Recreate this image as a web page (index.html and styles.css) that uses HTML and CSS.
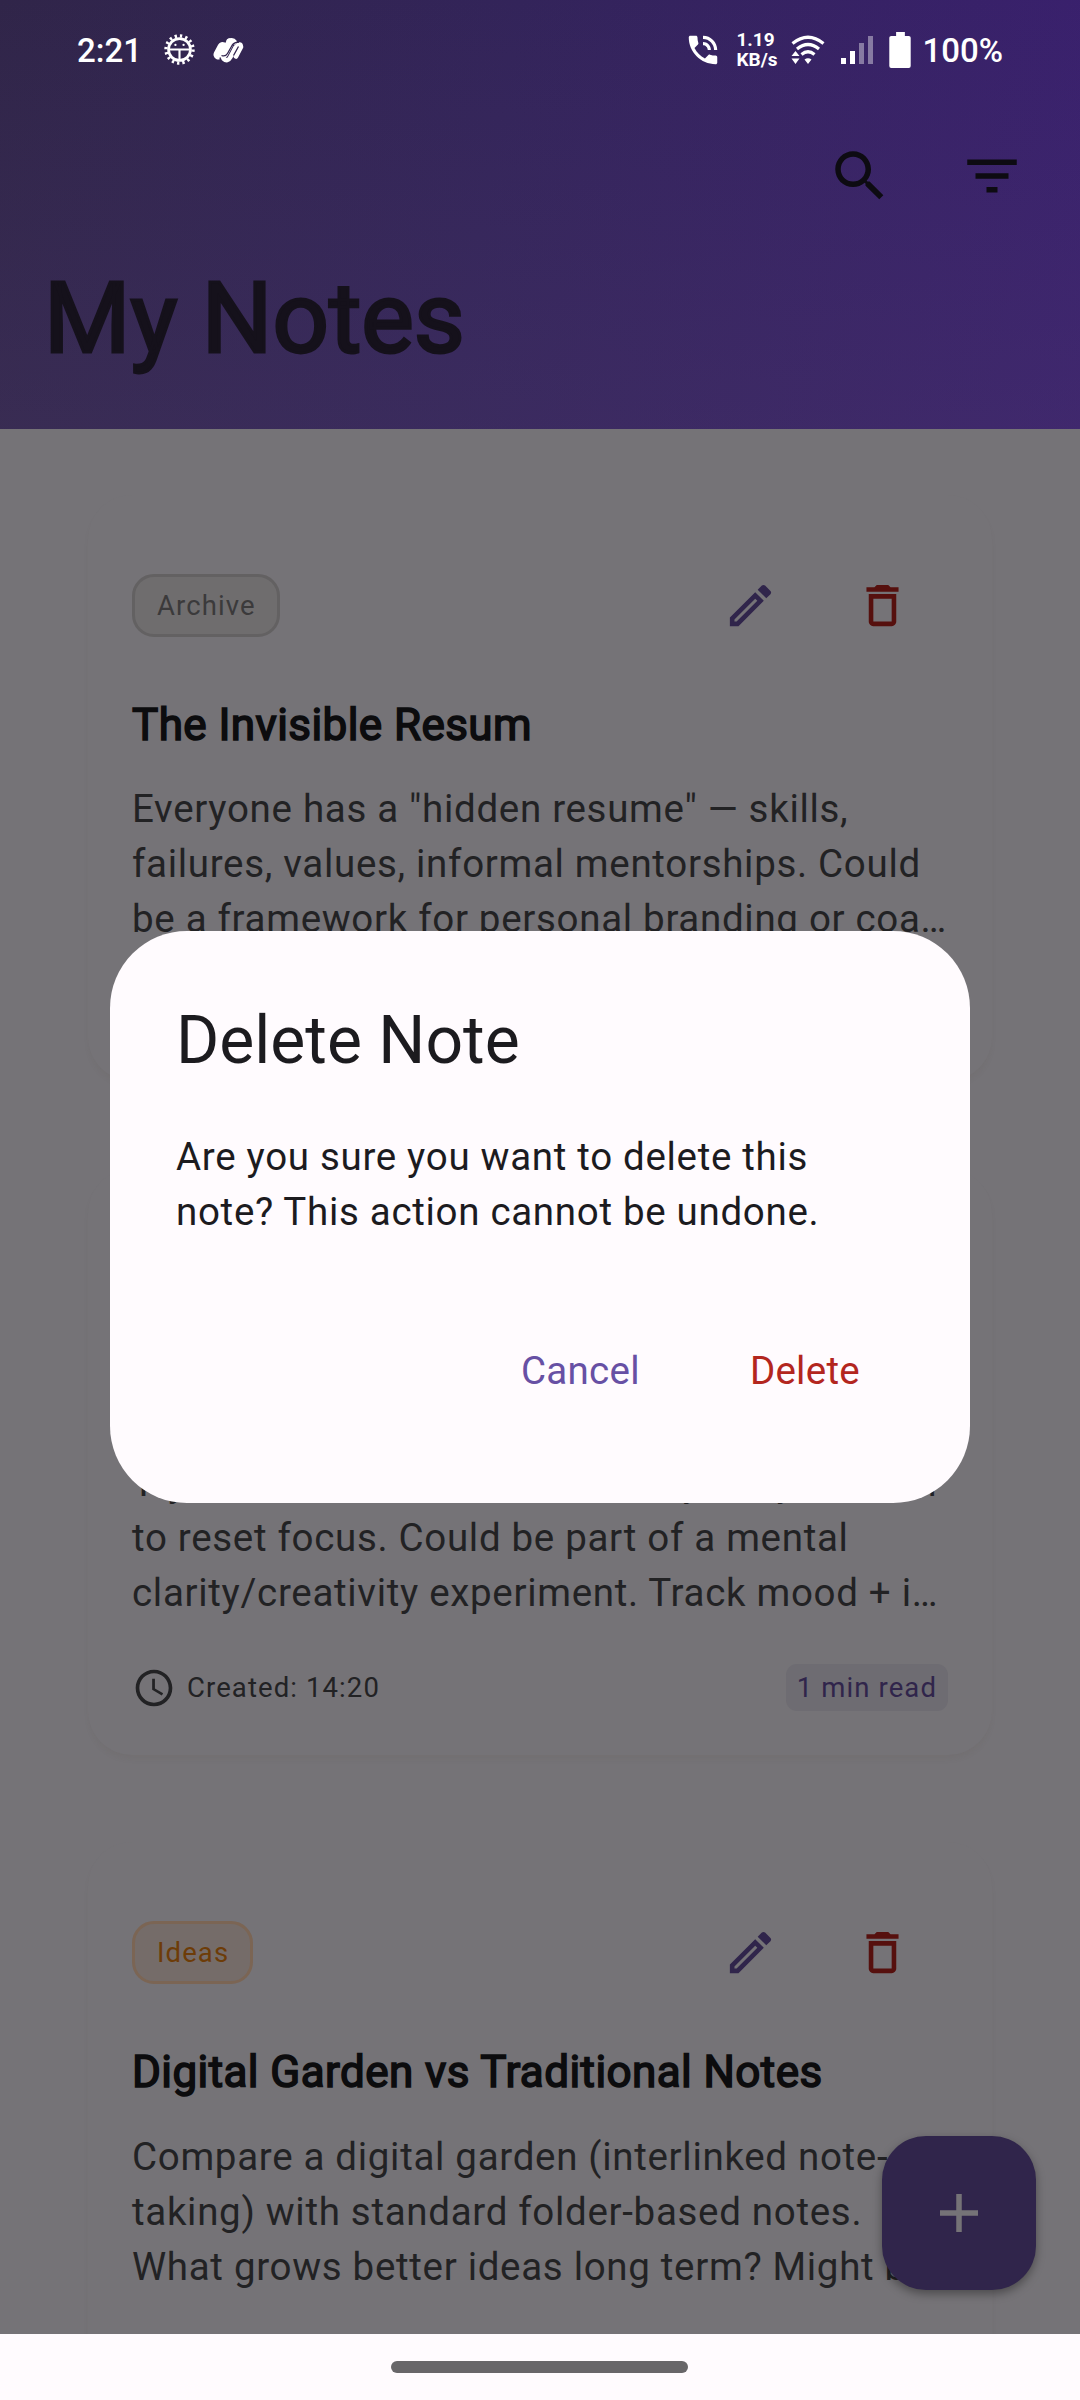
FILE: index.html
```html
<!DOCTYPE html>
<html lang="en">
<head>
<meta charset="utf-8">
<title>My Notes</title>
<link rel="stylesheet" href="styles.css">
</head>
<body>
<svg class="defs" aria-hidden="true">
  <symbol id="edit" viewBox="0 0 24 24"><path d="M14.06 9.02l.92.92L5.92 19H5v-.92l9.06-9.06M17.66 3c-.25 0-.51.1-.7.29l-1.83 1.83 3.75 3.75 1.83-1.83c.39-.39.39-1.02 0-1.41l-2.34-2.34c-.2-.2-.45-.29-.71-.29zm-3.6 3.19L3 17.25V21h3.75L17.81 9.94l-3.75-3.75z"/></symbol>
  <symbol id="trash" viewBox="0 0 24 24"><path d="M16 9v10H8V9h8m-1.500-6h-5l-1 1H5v2h14V4h-3.500l-1-1zM18 7H6v12c0 1.100.9 2 2 2h8c1.100 0 2-.9 2-2V7z"/></symbol>
  <symbol id="clock" viewBox="0 0 24 24"><path d="M11.990 2C6.470 2 2 6.480 2 12s4.470 10 9.990 10C17.520 22 22 17.520 22 12S17.520 2 11.990 2zM12 20c-4.420 0-8-3.580-8-8s3.580-8 8-8 8 3.580 8 8-3.580 8-8 8zm.5-13H11v6l5.250 3.150.75-1.230-4.500-2.670z"/></symbol>
</svg>
<div class="screen">
  <header class="header">
    <div class="status">
      <div class="status-left">
        <span class="time">2:21</span>
        <svg class="gear" viewBox="0 0 32 32"><circle cx="16" cy="16" r="11.300" fill="none" stroke="#fff" stroke-width="2.800"/><circle cx="16" cy="16" r="14" fill="none" stroke="#fff" stroke-width="3.400" stroke-dasharray="2.400 3.098"/><path d="M5 16h22M16 16v11" stroke="#fff" stroke-width="2.200"/><circle cx="11.800" cy="11.300" r="1.200" fill="#fff"/><circle cx="20.200" cy="11.300" r="1.200" fill="#fff"/></svg>
        <svg class="swirl" viewBox="0 0 31 26"><g fill="none" stroke="#fff" stroke-linecap="round" stroke-linejoin="round"><path stroke-width="10" d="M5.500 17.500L9.500 10"/><path stroke-width="8" d="M11 17L17 5.500"/><path stroke-width="5" d="M16 4Q20 2.500 21.500 5"/><path stroke-width="4.600" d="M10.500 21.500Q14.500 25.500 17.500 20L22.500 10.500Q27.500 5 28 10L23 19.500"/></g><path fill="none" stroke="#33264f" stroke-width="1.300" d="M8.500 18.500Q12.500 20 14.500 16.500L19 8.500Q21.500 5 26 5M20.500 18.500L25.500 9.500M7 20.500L8 25"/></svg>
      </div>
      <div class="status-right">
        <svg class="call" viewBox="0 0 24 24" fill="#fff"><path d="M20 15.500c-1.250 0-2.450-.2-3.570-.57-.1-.03-.21-.05-.31-.05-.26 0-.51.1-.71.290l-2.200 2.200c-2.830-1.440-5.150-3.750-6.590-6.590l2.200-2.200c.28-.28.36-.67.25-1.020C8.700 6.450 8.500 5.250 8.500 4c0-.55-.45-1-1-1H4c-.55 0-1 .45-1 1 0 9.390 7.610 17 17 17 .55 0 1-.45 1-1v-3.500c0-.55-.45-1-1-1zM19 12h2c0-4.970-4.030-9-9-9v2c3.870 0 7 3.130 7 7zm-4 0h2c0-2.760-2.240-5-5-5v2c1.660 0 3 1.340 3 3z"/></svg>
        <span class="rate">1.19<br>KB/s</span>
        <svg class="wifi" viewBox="0 0 34 29"><g fill="none" stroke="#fff" stroke-width="3.200"><path d="M1.500 8.500Q17-4 32.500 8.500"/><path d="M6 14Q17 5 28 14"/><path d="M10.500 19.500Q17 14 23.500 19.500"/></g><path fill="#fff" d="M13.500 24.500Q17 22 20.500 24.500L17 29zM.5 21L4.500 16l4 5zM.5 23.500h8L4.500 29z"/></svg>
        <svg class="signal" viewBox="0 0 32 30" fill="#fff"><path d="M0 23h5v6H0zM9 16h5v13H9z"/><path opacity=".4" d="M18 8h5v21h-5zM27 1h5v28h-5z"/></svg>
        <svg class="battery" viewBox="0 0 22 37" fill="#fff"><path d="M7 0h9v4h4a2 2 0 0 1 2 2v29a2 2 0 0 1-2 2H2a2 2 0 0 1-2-2V6a2 2 0 0 1 2-2h5z"/></svg>
        <span class="percent">100%</span>
      </div>
    </div>
    <div class="actions">
      <svg class="icon-lg" viewBox="0 0 24 24"><path d="M15.500 14h-.79l-.28-.27C15.410 12.590 16 11.110 16 9.500 16 5.910 13.090 3 9.500 3S3 5.910 3 9.500 5.910 16 9.500 16c1.610 0 3.090-.59 4.230-1.570l.27.28v.79l5 4.990L20.490 19l-4.990-5zm-6 0C7.010 14 5 11.990 5 9.500S7.010 5 9.500 5 14 7.010 14 9.500 11.990 14 9.500 14z"/></svg>
      <svg class="icon-lg" viewBox="0 0 24 24"><path d="M10 18h4v-2h-4v2zM3 6v2h18V6H3zm3 7h12v-2H6v2z"/></svg>
    </div>
    <h1>My Notes</h1>
  </header>
  <main class="list">
    <article class="card">
      <div class="row"><span class="tag archive">Archive</span><span class="tools"><svg class="edit"><use href="#edit"/></svg><svg class="trash"><use href="#trash"/></svg></span></div>
      <h2>The Invisible Resum</h2>
      <p>Everyone has a "hidden resume" — skills,<br>failures, values, informal mentorships. Could<br>be a framework for personal branding or coa…</p>
      <div class="foot"></div>
    </article>
    <article class="card">
      <div class="row"></div>
      <h2></h2>
      <p>Try sound breaks between every busy hour all<br>to reset focus. Could be part of a mental<br>clarity/creativity experiment. Track mood + i…</p>
      <div class="foot"><svg class="clock"><use href="#clock"/></svg><span>Created: 14:20</span><span class="read">1 min read</span></div>
    </article>
    <article class="card">
      <div class="row"><span class="tag ideas">Ideas</span><span class="tools"><svg class="edit"><use href="#edit"/></svg><svg class="trash"><use href="#trash"/></svg></span></div>
      <h2>Digital Garden vs Traditional Notes</h2>
      <p>Compare a digital garden (interlinked note-<br>taking) with standard folder-based notes.<br>What grows better ideas long term? Might b…</p>
    </article>
  </main>
  <nav class="navbar"><div class="handle"></div></nav>
  <div class="fab"><svg viewBox="0 0 38 38"><path d="M19 0v38M0 19h38" stroke="#757377" stroke-width="5.500"/></svg></div>
  <section class="dialog">
    <h3>Delete Note</h3>
    <p>Are you sure you want to delete this<br>note? This action cannot be undone.</p>
    <div class="buttons"><span class="cancel">Cancel</span><span class="delete">Delete</span></div>
  </section>
</div>
</body>
</html>
```
FILE: styles.css
```css
* { box-sizing: border-box; margin: 0; padding: 0; }
body { font-family: Roboto, sans-serif; background: #757377; }
svg { display: block; flex: none; }
.defs { position: absolute; width: 0; height: 0; }
.screen { position: relative; width: 1080px; height: 2400px; overflow: hidden; display: flex; flex-direction: column; }

.header { height: 429px; flex: none; background: linear-gradient(to bottom, rgba(80,64,104,0) 0%, rgba(80,64,104,.26) 100%), linear-gradient(100deg, #302549 0%, #33245a 45%, #3a206f 100%); }
.status { height: 99px; padding: 0 77px; display: flex; justify-content: space-between; align-items: center; color: #fff; font-weight: 500; }
.status-left, .status-right { display: flex; align-items: center; }
.time, .percent { font-size: 33px; line-height: 40px; padding-top: 2px; }
.time { width: 63px; }
.gear { width: 31px; height: 31px; margin-left: 24px; }
.swirl { width: 31px; height: 26px; margin-left: 18px; }
.call { width: 38px; height: 38px; }
.rate { font-size: 19px; line-height: 20px; font-weight: 700; margin-left: 14px; width: 41px; white-space: nowrap; }
.wifi { width: 34px; height: 29px; margin-left: 14px; }
.signal { width: 32px; height: 30px; margin-left: 16px; }
.battery { width: 22px; height: 36px; margin-left: 16px; }
.percent { margin-left: 11px; }
.actions { height: 150px; display: flex; justify-content: flex-end; gap: 66px; padding: 44px 55px 0 0; }
.icon-lg { width: 66px; height: 66px; fill: #0d0b12; }
h1 { font-size: 99px; line-height: 132px; font-weight: 400; color: #15111b; -webkit-text-stroke: 3px #15111b; padding-left: 44px; margin-top: 3px; }

.list { height: 1905px; flex: none; overflow: hidden; padding: 66px 88px 0; display: flex; flex-direction: column; gap: 88px; background: #757377; }
.card { height: 586px; flex: none; padding: 44px; border-radius: 44px; background: #757377; box-shadow: 0 5px 5px -1px rgba(100,92,80,.12); }
.card:last-child { margin-top: -1px; }
.row { height: 132px; display: flex; align-items: center; justify-content: space-between; }
.tag { height: 63px; padding: 0 21px 0 22px; border: 3px solid; border-radius: 22px; font-size: 27.5px; line-height: 57px; letter-spacing: 1.1px; }
.archive { color: #3b3a3b; background: #6f6d6e; border-color: #636162; }
.ideas { color: #6d3c08; background: #756c69; border-color: #7b6554; }
.tools { display: flex; gap: 77px; padding-right: 38px; }
.tools svg { width: 55px; height: 55px; }
.edit { fill: #30254b; }
.trash { fill: #56100e; }
h2 { font-size: 44px; line-height: 66px; height: 66px; margin-top: 21px; font-weight: 400; -webkit-text-stroke: 1.6px #0c0c0e; color: #0c0c0e; white-space: nowrap; letter-spacing: .42px; }
.card p { margin-top: 23px; font-size: 38.5px; line-height: 55px; letter-spacing: .6875px; color: #222224; white-space: nowrap; }
.card:last-child p { margin-top: 24px; }
.foot { height: 47px; margin-top: 44px; display: flex; align-items: center; font-size: 27.5px; letter-spacing: 1.1px; color: #222224; }
.clock { width: 44px; height: 44px; margin-right: 11px; fill: #222224; }
.read { margin-left: auto; height: 47px; line-height: 47px; padding: 0 11px; border-radius: 11px; background: #6e6c72; color: #30254b; }

.navbar { height: 66px; flex: none; background: #fffbfe; display: flex; justify-content: center; padding: 27px 1px 0 0; }
.handle { width: 297px; height: 12px; border-radius: 6px; background: #686669; }
.fab { position: absolute; left: 882px; top: 2136px; width: 154px; height: 154px; border-radius: 44px; background: #30254b; box-shadow: 0 4px 10px rgba(0,0,0,.35); display: flex; align-items: center; justify-content: center; }
.fab svg { width: 38px; height: 38px; }

.dialog { position: absolute; left: 110px; top: 930.5px; width: 860px; height: 572px; padding: 66.5px 66px 66px; border-radius: 77px; background: #fffbfe; color: #1c1b1f; }
h3 { font-size: 66px; line-height: 88px; font-weight: 400; }
.dialog p { margin-top: 44px; font-size: 38.5px; line-height: 55px; letter-spacing: .6875px; white-space: nowrap; }
.buttons { margin-top: 65px; height: 132px; display: flex; align-items: center; justify-content: flex-end; gap: 110px; padding-right: 44px; font-size: 38.5px; letter-spacing: .275px; }
.cancel { color: #6750a4; }
.delete { color: #b3261e; }
```
